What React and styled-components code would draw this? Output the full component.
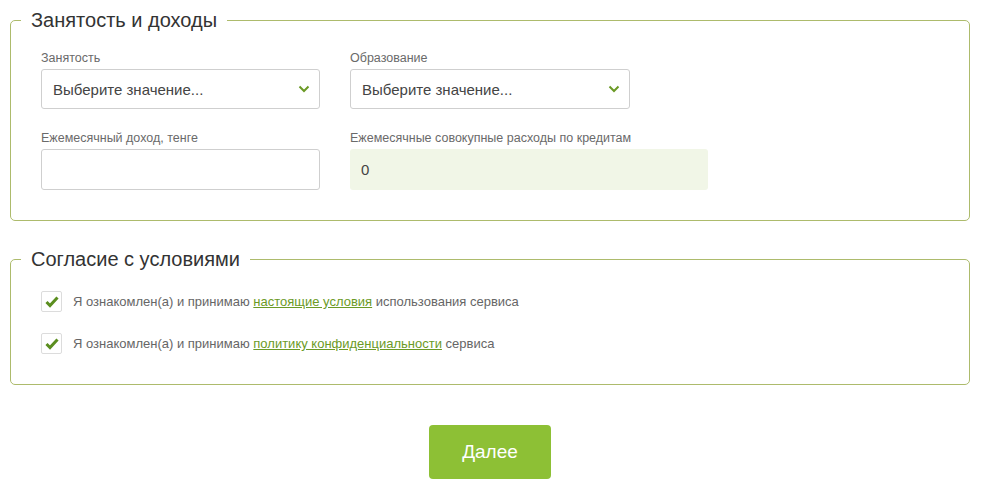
import React from "react";
import styled, { createGlobalStyle } from "styled-components";

const GlobalStyle = createGlobalStyle`
  body {
    margin: 0;
    background: #ffffff;
    font-family: "Liberation Sans", Arial, sans-serif;
  }
`;

const Page = styled.div`
  width: 960px;
  padding: 8px 0 0 10px;
  display: flex;
  flex-direction: column;
  align-items: center;
`;

const Fieldset = styled.fieldset`
  width: 100%;
  box-sizing: border-box;
  margin: ${(p) => (p.$first ? "0" : "26px 0 0")};
  padding: 0 10px ${(p) => p.$bottom || 30}px;
  border: 1px solid #adbb6c;
  border-radius: 5px;
`;

const Legend = styled.legend`
  padding: 0 10px;
  font-size: 20px;
  line-height: 24px;
  color: #333333;
`;

const Body = styled.div`
  padding: ${(p) => p.$top || 17}px 20px 0;
  display: flex;
  flex-direction: column;
  gap: ${(p) => p.$gap || 20}px;
`;

const Row = styled.div`
  display: flex;
  gap: 30px;
`;

const Field = styled.div`
  display: flex;
  flex-direction: column;
  width: ${(p) => p.$w}px;
`;

const Label = styled.label`
  font-size: 12.5px;
  line-height: 16px;
  color: #6a6a6a;
  margin: 1px 0 3px;
`;

const SelectBox = styled.div`
  height: 40px;
  box-sizing: border-box;
  border: 1px solid #cfcfcf;
  border-radius: 3px;
  display: flex;
  align-items: center;
  justify-content: space-between;
  padding: 0 9px 0 11px;
  font-size: 15px;
  color: #444444;
`;

const TextInput = styled.input`
  height: 41px;
  box-sizing: border-box;
  border: 1px solid ${(p) => (p.$filled ? "transparent" : "#cfcfcf")};
  border-radius: 3px;
  background: ${(p) => (p.$filled ? "#f1f6e7" : "#ffffff")};
  padding: 0 10px;
  font-family: inherit;
  font-size: 15px;
  color: #444444;
  outline: none;
`;

const Check = styled.div`
  display: flex;
  align-items: center;
  gap: 11px;
  font-size: 13px;
  color: #666666;
`;

const Box = styled.span`
  width: 21px;
  height: 21px;
  box-sizing: border-box;
  border: 1px solid #dcdcdc;
  border-radius: 2px;
  display: flex;
  align-items: center;
  justify-content: center;
`;

const Link = styled.a`
  color: #6b9a26;
  text-decoration: underline;
`;

const Button = styled.button`
  margin-top: 40px;
  width: 122px;
  height: 54px;
  border: none;
  border-radius: 4px;
  background: #8dc035;
  color: #ffffff;
  font-family: inherit;
  font-size: 19px;
`;

const Chevron = () => (
  <svg width="12" height="8" viewBox="0 0 12 8">
    <path d="M1.5 1.5 L6 6 L10.5 1.5" fill="none" stroke="#6b9a26" strokeWidth="2" />
  </svg>
);

const Tick = () => (
  <svg width="14" height="12" viewBox="0 0 14 12">
    <path d="M1.5 6 L5 9.5 L12.5 1.5" fill="none" stroke="#5b8e1f" strokeWidth="3" />
  </svg>
);

export default function App() {
  return (
    <Page>
      <GlobalStyle />
      <Fieldset $first>
        <Legend>Занятость и доходы</Legend>
        <Body>
          <Row>
            <Field $w={279}>
              <Label>Занятость</Label>
              <SelectBox>
                Выберите значение...
                <Chevron />
              </SelectBox>
            </Field>
            <Field $w={280}>
              <Label>Образование</Label>
              <SelectBox>
                Выберите значение...
                <Chevron />
              </SelectBox>
            </Field>
          </Row>
          <Row>
            <Field $w={279}>
              <Label>Ежемесячный доход, тенге</Label>
              <TextInput />
            </Field>
            <Field $w={358}>
              <Label>Ежемесячные совокупные расходы по кредитам</Label>
              <TextInput $filled defaultValue="0" />
            </Field>
          </Row>
        </Body>
      </Fieldset>
      <Fieldset $bottom={30}>
        <Legend>Согласие с условиями</Legend>
        <Body $top={20} $gap={21}>
          <Check>
            <Box>
              <Tick />
            </Box>
            <span>
              Я ознакомлен(а) и принимаю <Link>настоящие условия</Link> использования сервиса
            </span>
          </Check>
          <Check>
            <Box>
              <Tick />
            </Box>
            <span>
              Я ознакомлен(а) и принимаю <Link>политику конфиденциальности</Link> сервиса
            </span>
          </Check>
        </Body>
      </Fieldset>
      <Button>Далее</Button>
    </Page>
  );
}
